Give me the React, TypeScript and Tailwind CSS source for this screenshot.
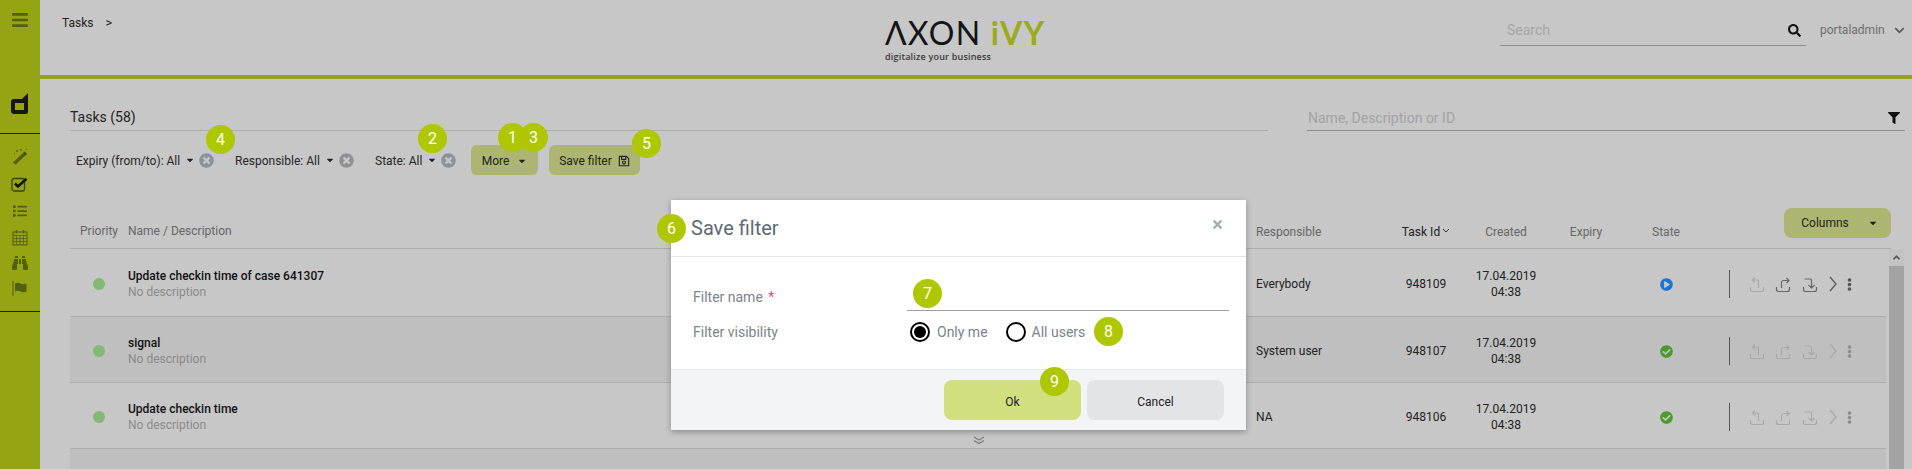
import React from "react";
import {
  FaBars, FaList, FaBinoculars,
  FaTimesCircle, FaCaretDown, FaRegSave, FaFilter, FaSearch, FaChevronDown, FaTimes,
  FaCheckCircle, FaPlayCircle, FaEllipsisV, FaAngleUp,
} from "react-icons/fa";

function Tray({ kind, color }: { kind: number; color: string }) {
  return (
    <svg width="16" height="17" viewBox="0 0 16 17" fill="none" stroke={color} strokeWidth="1.2">
      <path d="M1.500 11v2.500a2 2 0 0 0 2 2h9a2 2 0 0 0 2-2V11" />
      {kind === 0 && <path d="M6 1.500 3.500 4 6 6.500M3.500 4H8a1.500 1.500 0 0 1 1.500 1.500V12" />}
      {kind === 1 && <path d="M6.500 12V6.500A2 2 0 0 1 8.500 4.500H14M11.500 2 14 4.500 11.500 7" />}
      {kind === 2 && <path d="M2.500 3H8a1.500 1.500 0 0 1 1.500 1.500V12M6.500 9 9.500 12 12.500 9" />}
    </svg>
  );
}

function Badge({ n, pos }: { n: number; pos: string }) {
  return (
    <div className={`absolute ${pos} flex h-[29px] w-[29px] items-center justify-center rounded-full bg-[#afc700] text-[16px] leading-none text-white`}>
      {n}
    </div>
  );
}

function Chip({ label, cls }: { label: string; cls: string }) {
  return (
    <div className={`flex items-center ${cls}`}>
      <span className="pt-[1px] text-[12px] text-[#262626]">{label}</span>
      <FaCaretDown className="ml-[5px] text-[10px] text-[#222]" />
      <FaTimesCircle className="ml-[4px] text-[15px] text-[#8f9193]" />
    </div>
  );
}

const rows = [
  { title: "Update checkin time of case 641307", resp: "Everybody", id: "948109", play: true, dark: false },
  { title: "signal", resp: "System user", id: "948107", play: false, dark: true },
  { title: "Update checkin time", resp: "NA", id: "948106", play: false, dark: false },
];

const cols = "grid grid-cols-[58px_1128px_140px_60px_100px_60px_100px_175px]";
const rowCols = "grid grid-cols-[58px_1128px_140px_60px_100px_60px_100px_170px]";

export default function App() {
  return (
    <div className="relative flex h-[469px] w-[1912px] overflow-hidden bg-[#c7c7c7] font-['Roboto',sans-serif]">
      {/* Sidebar */}
      <aside className="flex w-[40px] shrink-0 flex-col items-center bg-[#94a413]">
        <FaBars className="mt-[11px] h-[18px] w-[18px] text-[#566010]" />
        <svg className="mt-[64px]" width="18" height="21" viewBox="0 0 18 21" fill="#161616">
          <path d="M17 0v19a2 2 0 0 1-2 2H3a3 3 0 0 1-3-3V9a3 3 0 0 1 3-3h8l6-6zM4 10v7h9v-7z" />
        </svg>
        <div className="mt-[19px] h-px w-full bg-[#1d2005]" />
        {/* wand */}
        <svg className="mt-[14px]" width="16" height="17" viewBox="0 0 16 17" fill="none">
          <path d="M1 14.500 11 5l2.500 2.500L3.500 16.500z" fill="#555f10" />
          <path d="M11 5l1.500-1.500L15 6l-1.500 1.500z" fill="#3d450c" />
          <path d="M5 2v2M4 3h2M9 1v1.500M8.300 1.700h1.500M14 1v1M2 6h1" stroke="#555f10" strokeWidth="0.9" />
        </svg>
        {/* checked box */}
        <svg className="mt-[12px]" width="18" height="15" viewBox="0 0 18 15" fill="none">
          <rect x="1" y="1.500" width="12.500" height="12.500" rx="2" stroke="#3c440e" strokeWidth="1.300" />
          <path d="M4 6.500 7 9.500 15.500 1.800" stroke="#111" strokeWidth="2.600" />
        </svg>
        <FaList className="mt-[12px] h-[14px] w-[16px] text-[#555f10]" />
        {/* calendar */}
        <svg className="mt-[11px]" width="16" height="17" viewBox="0 0 16 17" fill="none" stroke="#555f10" strokeWidth="1.100">
          <rect x="1" y="3" width="14" height="13" />
          <path d="M1 6.500h14M1 9.500h14M1 12.500h14M4.500 6.500V16M8 6.500V16M11.500 6.500V16" strokeWidth="0.800" />
          <path d="M4.500 1v3.500M11.500 1v3.500" strokeWidth="1.500" />
        </svg>
        <FaBinoculars className="mt-[9px] h-[16px] w-[16px] text-[#555f10]" />
        {/* flag */}
        <svg className="mt-[10px]" width="16" height="15" viewBox="0 0 16 15" fill="#555f10">
          <rect x="0.500" y="0" width="1" height="15" />
          <path d="M3 2.500c2-1 4-1 5.500 0s3.500 1 6 0v8c-2.500 1-4.500 1-6 0s-3.500-1-5.500 0z" />
        </svg>
        <div className="mt-[15px] h-px w-full bg-[#1d2005]" />
      </aside>

      {/* Main */}
      <main className="flex min-w-0 flex-1 flex-col">
        <header className="flex h-[79px] shrink-0 border-b-4 border-[#94a413] pl-[22px]">
          <div className="flex h-[46px] w-[823px] shrink-0 items-center text-[12px] text-[#222]">
            <span>Tasks</span>
            <span className="ml-[12px] text-[13px]">&gt;</span>
          </div>
          <div className="flex w-[170px] shrink-0 flex-col pt-[14px]">
            <div className="whitespace-nowrap font-['Lato',sans-serif] text-[32px] leading-[37px] tracking-[1.200px] text-[#151515]">
              ΛXON <span className="font-bold text-[#9aab1e]">iVY</span>
            </div>
            <div className="whitespace-nowrap font-['Open_Sans',sans-serif] text-[9px] font-semibold leading-[12px] tracking-[0.200px] text-[#3a3a3a]">
              digitalize your business
            </div>
          </div>
          <div className="ml-[445px] flex h-[46px] w-[306px] shrink-0 items-end border-b border-[#8e8e8e] pb-[5px] pl-[7px] pr-[5px]">
            <span className="flex-1 text-[14px] leading-[20px] text-[#a6a6a6]">Search</span>
            <FaSearch className="mb-[3px] text-[13px] text-[#111]" />
          </div>
          <div className="ml-[14px] flex h-[60px] items-center text-[12px] text-[#6e6e6e]">
            <span>portaladmin</span>
            <FaChevronDown className="ml-[9px] text-[11px] text-[#5c5c5c]" />
          </div>
        </header>

        <div className="flex flex-1 flex-col overflow-hidden pl-[30px]">
          {/* title row */}
          <div className="mt-[27px] flex h-[25px] shrink-0">
            <div className="flex w-[1198px] items-center border-b border-[#adadad] pb-[2px] text-[14px] text-[#222]">
              Tasks (58)
            </div>
            <div className="ml-[39px] flex w-[598px] items-center justify-between border-b border-[#8e8e8e] pl-[1px] pr-[5px]">
              <span className="text-[14px] text-[#a3a3a3]">Name, Description or ID</span>
              <FaFilter className="text-[12px] text-[#111]" />
            </div>
          </div>

          {/* filter row */}
          <div className="mt-[14px] flex h-[30px] shrink-0 items-center pl-[6px]">
            <Chip label="Expiry (from/to): All" cls="w-[159px]" />
            <Chip label="Responsible: All" cls="w-[140px]" />
            <Chip label="State: All" cls="w-[96px]" />
            <button className="flex h-[30px] w-[67px] items-center justify-center rounded-[6px] bg-[#adb572] pt-[1px] text-[12px] text-[#222]">
              More
              <FaCaretDown className="ml-[8px] text-[10px]" />
            </button>
            <button className="ml-[11px] flex h-[30px] w-[91px] items-center justify-center rounded-[6px] bg-[#adb572] pt-[1px] text-[12px] text-[#222]">
              Save filter
              <FaRegSave className="ml-[6px] text-[12px]" />
            </button>
          </div>

          {/* table header */}
          <div className={`${cols} mt-[33px] h-[41px] w-[1821px] shrink-0 border-b border-[#adadad] text-[12px] text-[#666]`}>
            <div className="pl-[10px] pt-[14px]">Priority</div>
            <div className="pt-[14px]">Name / Description</div>
            <div className="pt-[15px]">Responsible</div>
            <div className="flex items-start justify-center pt-[15px] text-[#222]">
              Task Id
              <svg className="ml-[2px] mt-[5px]" width="8" height="6" viewBox="0 0 8 6" fill="none" stroke="#333" strokeWidth="1">
                <path d="M1 1l3 3 3-3" />
              </svg>
            </div>
            <div className="pt-[15px] text-center">Created</div>
            <div className="pt-[15px] text-center">Expiry</div>
            <div className="pt-[15px] text-center">State</div>
            <div className="flex justify-end">
              <button className="flex h-[30px] w-[107px] items-center justify-center rounded-[8px] bg-[#adb572] pl-[4px] text-[12px] text-[#222]">
                Columns
                <FaCaretDown className="ml-[19px] text-[10px]" />
              </button>
            </div>
          </div>

          {/* rows + scrollbar */}
          <div className="flex flex-1 overflow-hidden">
            <div className="ml-[2px] w-[1814px] shrink-0">
              {rows.map((r, i) => {
                const faint = "#a9a9a9";
                const strong = "#686868";
                return (
                  <div
                    key={r.id}
                    className={`${rowCols} -ml-[2px] ${i === 0 ? "h-[68px]" : "h-[66px]"} border-b border-[#adadad] pt-[3px] ${r.dark ? "bg-[#bfbfbf]" : ""} text-[12px] text-[#222]`}
                  >
                    <div className="flex items-center justify-center">
                      <span className="h-[12px] w-[12px] rounded-full bg-[#83b877]" />
                    </div>
                    <div className="flex flex-col justify-center leading-[16px]">
                      <span className="font-medium text-[#111]">{r.title}</span>
                      <span className="text-[#8a8a8a]">No description</span>
                    </div>
                    <div className="flex items-center">{r.resp}</div>
                    <div className="flex items-center justify-center">{r.id}</div>
                    <div className="flex flex-col items-center justify-center leading-[16px]">
                      <span>17.04.2019</span>
                      <span>04:38</span>
                    </div>
                    <div />
                    <div className="flex items-center justify-center">
                      {r.play ? (
                        <FaPlayCircle className="text-[13px] text-[#1b76d2]" />
                      ) : (
                        <FaCheckCircle className="text-[13px] text-[#4a9a2c]" />
                      )}
                    </div>
                    <div className="flex items-center pl-[13px]">
                      <div className="mr-[19px] h-[28px] w-px bg-[#555]" />
                      <div className="flex w-[89px] items-center justify-between">
                        <Tray kind={0} color={faint} />
                        <Tray kind={1} color={i === 0 ? strong : faint} />
                        <Tray kind={2} color={i === 0 ? strong : faint} />
                        <svg width="10" height="18" viewBox="0 0 10 18" fill="none" stroke={i === 0 ? "#5f5f5f" : faint} strokeWidth="1.400">
                          <path d="M2 2l6 7-6 7" />
                        </svg>
                      </div>
                      <FaEllipsisV className={`ml-[5px] text-[13px] ${i === 0 ? "text-[#555]" : "text-[#8d8d8d]"}`} />
                    </div>
                  </div>
                );
              })}
              <div className="-ml-[2px] h-[30px] bg-[#bfbfbf]" />
            </div>
            <div className="ml-[3px] flex w-[15px] shrink-0 flex-col">
              <div className="flex h-[17px] items-center justify-center bg-[#c2c2c2]">
                <FaAngleUp className="text-[11px] text-[#555]" />
              </div>
              <div className="flex-1 bg-[#a3a3a3]" />
            </div>
          </div>
        </div>
      </main>

      {/* Save filter dialog */}
      <div className="absolute left-[671px] top-[200px] flex h-[230px] w-[575px] flex-col bg-white shadow-[0_2px_6px_rgba(0,0,0,0.3)]">
        <div className="flex h-[57px] shrink-0 items-start justify-between border-b border-[#e3e5e8] pl-[20px] pr-[22px]">
          <span className="mt-[16px] text-[20px] leading-[24px] text-[#5d6a72]">Save filter</span>
          <FaTimes className="mt-[18px] text-[13px] text-[#a3adb3]" />
        </div>
        <div className="flex-1 pl-[22px] pr-[17px]">
          <div className="mt-[24px] flex h-[30px]">
            <div className="w-[214px] pt-[4px] text-[14px] leading-[24px] text-[#7a858c]">
              Filter name <span className="ml-[2px] text-[#e8467c]">*</span>
            </div>
            <div className="flex-1 border-b border-[#a1a1a1]" />
          </div>
          <div className="mt-[9px] flex h-[24px] items-center">
            <div className="w-[217px] text-[14px] text-[#7a858c]">Filter visibility</div>
            <div className="flex h-[20px] w-[20px] items-center justify-center rounded-full border-2 border-black">
              <div className="h-[12px] w-[12px] rounded-full bg-black" />
            </div>
            <span className="ml-[7px] text-[14px] text-[#7a858c]">Only me</span>
            <div className="ml-[18px] h-[20px] w-[20px] rounded-full border-2 border-black" />
            <span className="ml-[6px] text-[14px] text-[#7a858c]">All users</span>
          </div>
        </div>
        <div className="flex h-[61px] shrink-0 justify-end gap-[6px] border-t border-[#e8eaec] bg-[#f3f4f6] pr-[22px] pt-[10px]">
          <button className="h-[40px] w-[137px] rounded-[8px] bg-[#d2df7f] pt-[3px] text-[12px] text-[#222]">Ok</button>
          <button className="h-[40px] w-[137px] rounded-[8px] bg-[#e2e4e6] pt-[3px] text-[12px] text-[#222]">Cancel</button>
        </div>
      </div>

      <svg className="absolute left-[973px] top-[436px]" width="12" height="9" viewBox="0 0 12 9" fill="none" stroke="#7a7a7a" strokeWidth="1.200">
        <path d="M1 1l5 3 5-3M1 4.500l5 3 5-3" />
      </svg>

      {/* Tutorial badges */}
      <Badge n={3} pos="left-[519px] top-[123px]" />
      <Badge n={1} pos="left-[498px] top-[123px]" />
      <Badge n={2} pos="left-[418px] top-[124px]" />
      <Badge n={4} pos="left-[206px] top-[125px]" />
      <Badge n={5} pos="left-[632px] top-[129px]" />
      <Badge n={6} pos="left-[657px] top-[214px]" />
      <Badge n={7} pos="left-[913px] top-[279px]" />
      <Badge n={8} pos="left-[1094px] top-[317px]" />
      <Badge n={9} pos="left-[1040px] top-[367px]" />
    </div>
  );
}
